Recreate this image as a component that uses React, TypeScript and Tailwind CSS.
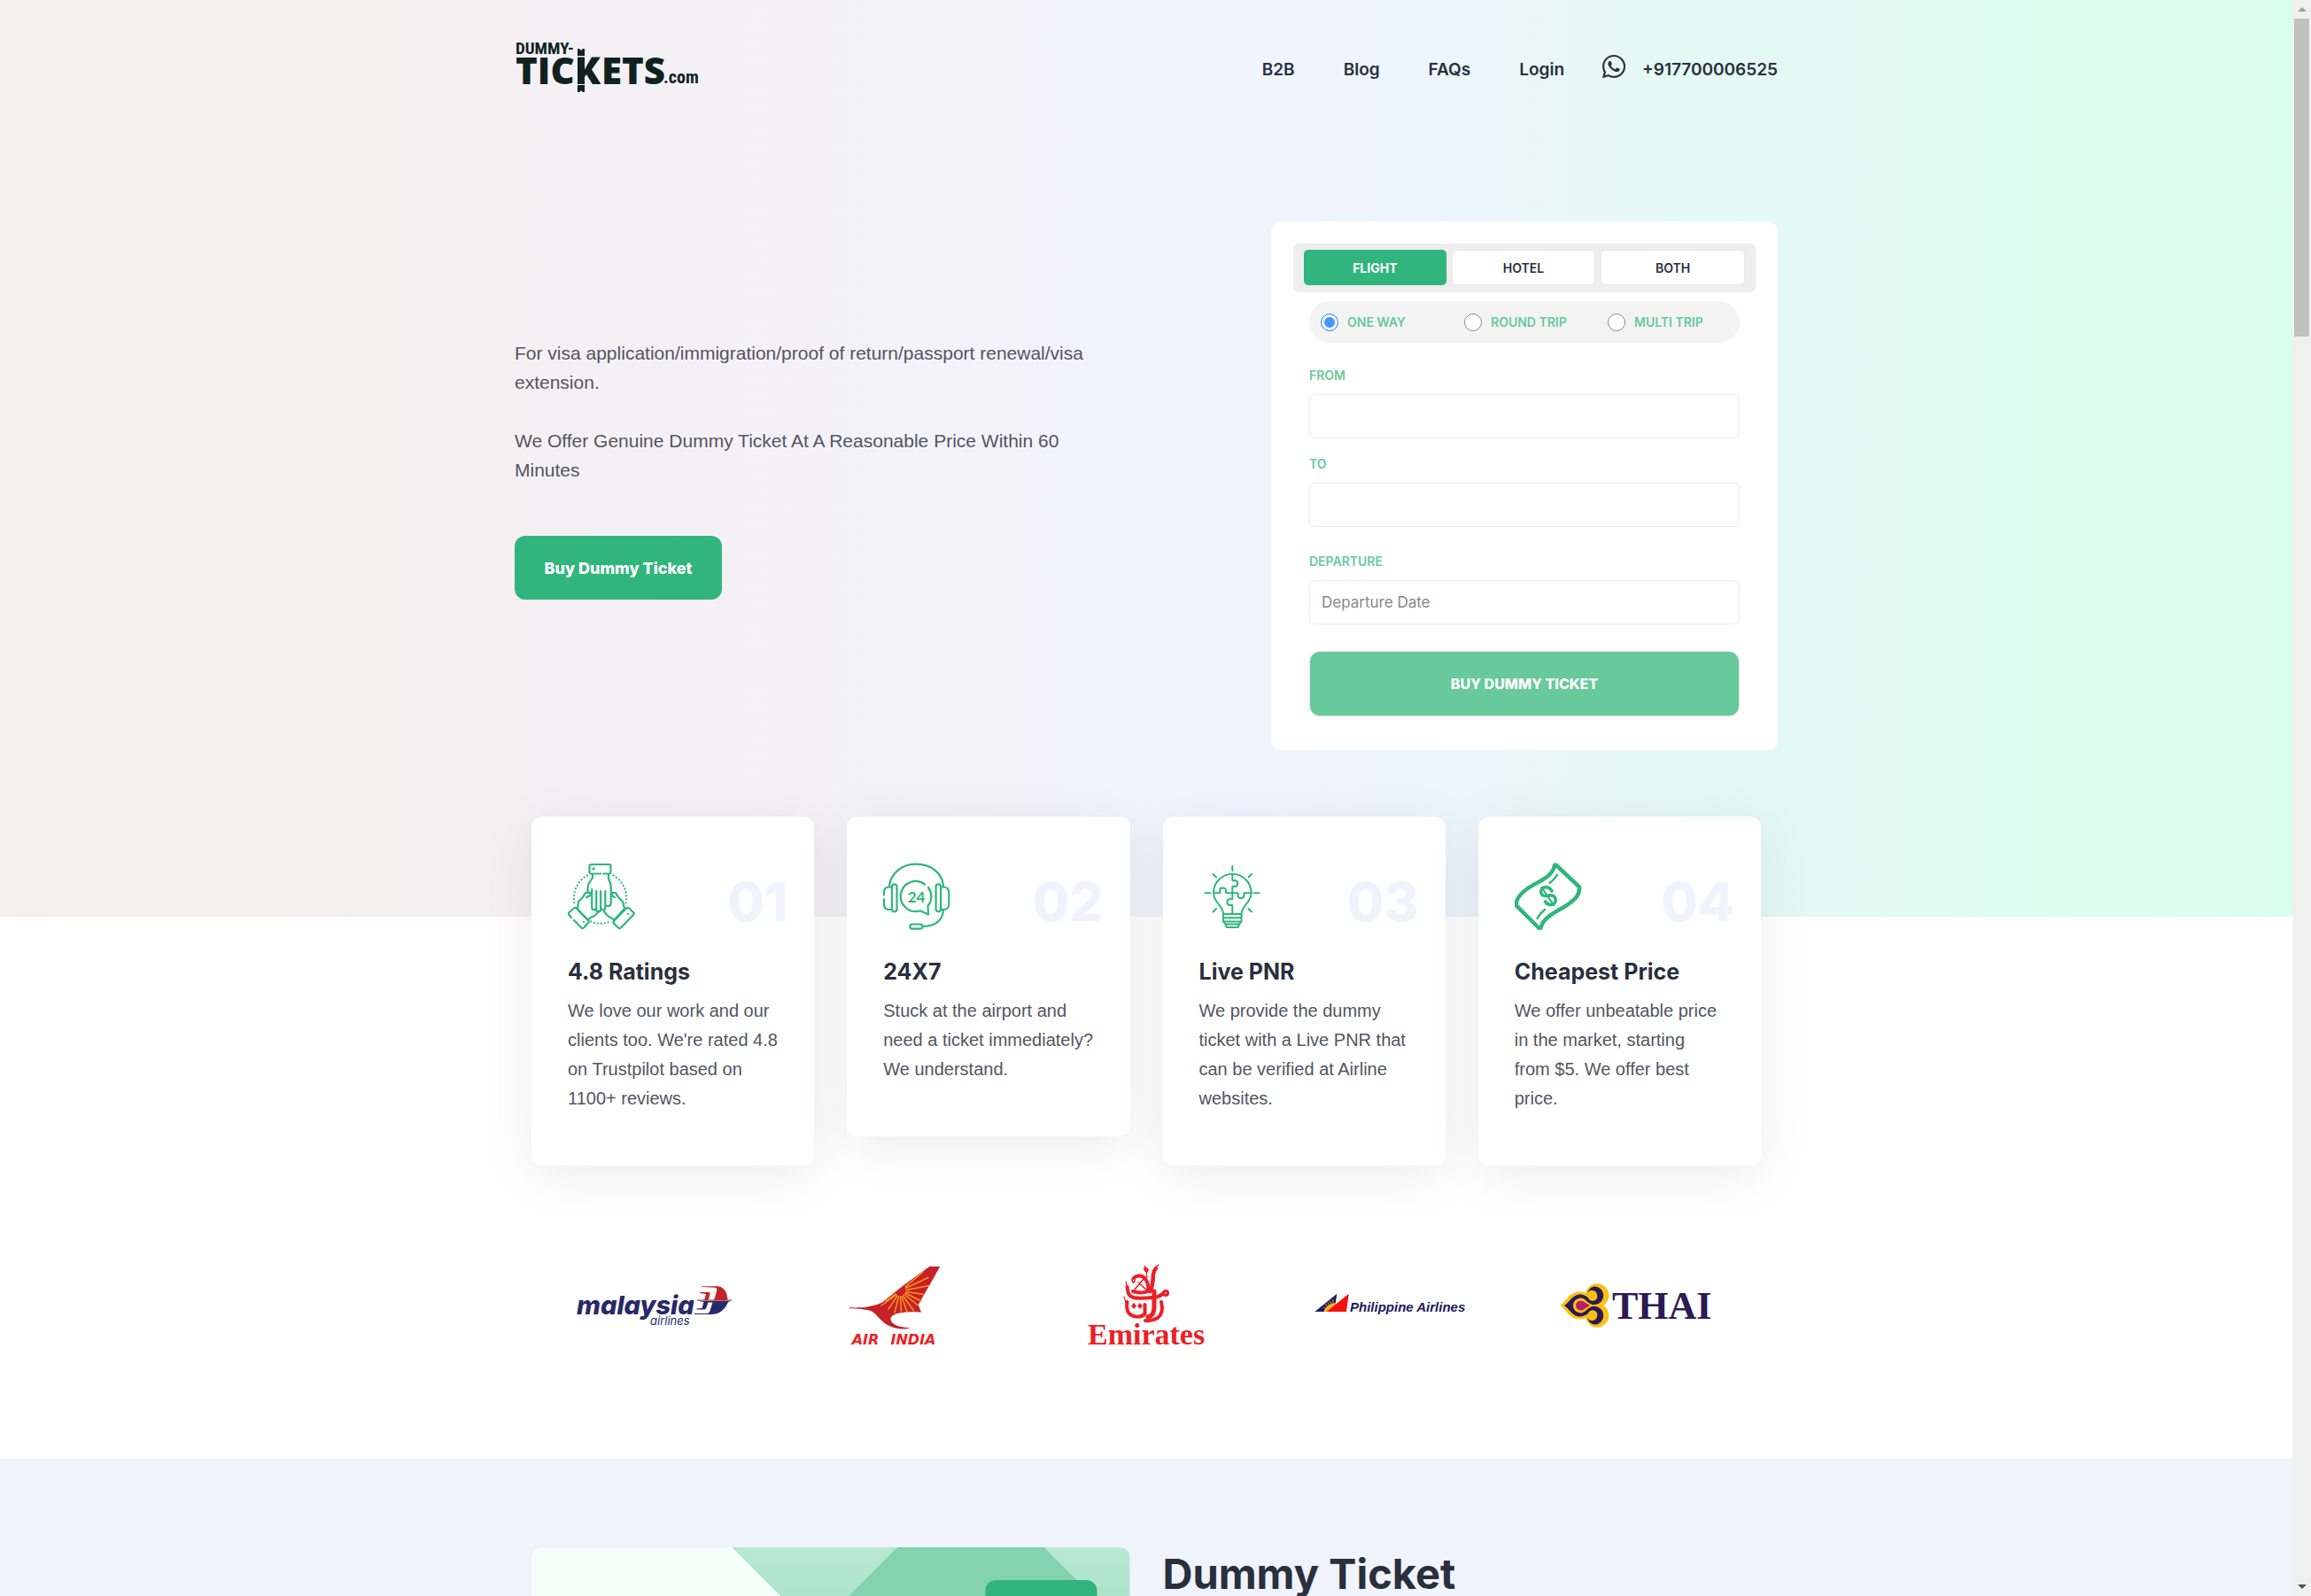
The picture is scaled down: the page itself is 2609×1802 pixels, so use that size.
import React from "react";
import { FaWhatsapp } from "react-icons/fa";

const navLinks = ["B2B", "Blog", "FAQs", "Login"];

function BrandLogo() {
  return (
    <svg width="210" height="64" viewBox="0 0 210 64" fill="#10221f" aria-label="Dummy-Tickets.com">
      <text x="1" y="17" fontSize="19" fontWeight="700" fontFamily="'Liberation Sans Narrow','Roboto Condensed',Roboto,sans-serif">DUMMY-</text>
      <text x="1" y="51" fontSize="42" fontWeight="800" fontFamily="'Open Sans',sans-serif">TIC</text>
      <path d="M71 11h2.500c0 2 3 2 3 0H79v8h-8zM71 60h2.500c0-2 3-2 3 0H79v-8h-8zM71 20.500h8v14l8-14h10L87 34.500 97.500 51H88l-7-11-2 3v8h-8z" />
      <text x="98" y="51" fontSize="42" fontWeight="800" fontFamily="'Open Sans',sans-serif">ETS</text>
      <text x="168" y="50" fontSize="20" fontWeight="700" fontFamily="'Liberation Sans Narrow','Roboto Condensed',Roboto,sans-serif">.com</text>
    </svg>
  );
}

const iconProps = {
  width: 76,
  height: 76,
  viewBox: "0 0 76 76",
  fill: "none",
  stroke: "#2fb67c",
  strokeWidth: 2.2,
  strokeLinecap: "round" as const,
  strokeLinejoin: "round" as const,
};

function HandsIcon() {
  return (
    <svg {...iconProps}>
      <path d="M37 12.500H26.500a2 2 0 0 1-2-2V4a2 2 0 0 1 2-2H46.500a2 2 0 0 1 2 2v6.500a2 2 0 0 1-2 2H40" />
      <circle cx="29" cy="7" r="0.600" />
      <path d="M28 13v4l-4 6c-1 2-1.400 3-1.400 5v6M46 13v5l2 5c.6 1.500.7 2.500.7 4v19c0 2-1 3-3.600 3" />
      <path d="M27.200 30v21c0 3 5 3 5 0V32M32.200 50v3c0 3 5 3 5 0V32M37.300 51c0 3 5 3 5 0V32M42.300 47c0 1.500 1 2 2.500 2" />
      <path d="M26 34h-6l-3 5-5 5-1 9 12 12c1-3 4-3 7-5 2-1 3-3 5-5" />
      <path d="M21 39c2 0 4-2 5-4" />
      <path d="M49 34h5l3 5 5 5 2 8-12 13c-2-4-6-3-8-6l-3-4" />
      <path d="M53 39c-2 0-3-2-4-4M4 62l-2.500-3c-.8-1-.8-2 0-3L7 51.500c.8-.8 2-.8 3 0L23 65c.8 1 .8 2 0 3l-5 5.500c-.8.8-1.800.8-2.600 0L7 65" />
      <path d="M66 51.500 52 66c-.8 1-.8 1.800 0 2.600l5 4.900c.9.900 2 .9 2.900 0L74 59c.9-1 .9-2 0-3l-5-4.500c-1-.9-2-.9-3 0z" />
      <path d="M18 67v.1M68 58v.1" />
      <path d="M22 14.500A29 29 0 0 0 7.500 46M51.500 14.500A29 29 0 0 1 65.500 46M26 66.500a29 29 0 0 0 22 0" strokeDasharray="0.100 3.900" />
    </svg>
  );
}

function HeadsetIcon() {
  return (
    <svg {...iconProps}>
      <path d="M6.800 27.500C8 12 21 1.700 37.500 1.700S67 12 68.200 27" />
      <rect x="10" y="24.300" width="5.500" height="31" rx="2.700" />
      <rect x="59.600" y="24.300" width="5.500" height="31" rx="2.700" />
      <path d="M10 27.500H7c-4 0-6 2.500-6 6v3M1 41v6c0 3.500 2 6 6 6h3" />
      <path d="M65 27.500h3c4 0 6.300 2.500 6.300 6V47c0 3.500-2.300 6-6.300 6h-3" />
      <path d="M47 24.500a17 17 0 1 0-5 29.800l9 4.200-.5-9.500a17 17 0 0 0 .5-21" />
      <path d="M68 54c-1 11-9 18-23 18" />
      <rect x="30.300" y="69.500" width="14.200" height="5.200" rx="2.600" />
      <text x="37.500" y="45" textAnchor="middle" fontSize="17" fontWeight="700" fill="#2fb67c" stroke="none" fontFamily="Lato,sans-serif">24</text>
    </svg>
  );
}

function BulbIcon() {
  return (
    <svg {...iconProps} strokeWidth={2}>
      <path d="M27 58c0-10-11-12-11-24a21.300 21.300 0 0 1 42.600 0c0 12-11 14-11 24z" />
      <path d="M16 34.300h6.500c1.500 0 .5-1.500.5-2.500 0-4.500 7-4.500 7 0 0 1-1 2.500.5 2.500H43c1.500 0 .5 1.500.5 2.500 0 4.500 7 4.500 7 0 0-1-1-2.500.5-2.500h7.500" />
      <path d="M37.300 13v6.500c0 1.500 1.500.5 2.500.5 4.500 0 4.500 7 0 7-1 0-2.500-1-2.500.5v13c0 1.500-1.500.5-2.500.5-4.500 0-4.500 7 0 7 1 0 2.500-1 2.500.5V58" />
      <path d="M27 58h20.500v8.500l-2.500 3H29.500l-2.500-3zM27 62.300h20.500M27 66.500h20.500M29.500 69.500 31 73h12.500l1.500-3.500" />
      <path d="M37.300 4v5.300M15.500 13l3.500 3.500M59 13l-3.500 3.500M6.500 34.300h6M61.500 34.300h6M15.500 55.500 19 52M59 55.500 55.500 52" />
    </svg>
  );
}

function MoneyIcon() {
  return (
    <svg {...iconProps} strokeWidth={4.500}>
      <path d="M46.500 2.500 73 27.500c1 9-6 15-14 20.500-13 8-27 14-29.500 25.500L27.500 74 1.500 48c0-8 6-14 14-19.500C27 21 43 16 45 3z" />
      <path d="M48 13.500Q45 19 39.500 23M34 53q-5.500 4-8.500 10" strokeWidth={2.400} />
      <path d="M42 32c-2-4-7-5.500-10-3.500s-3.500 6 0 8.500c3 1.800 8-1.500 11.500.5s3.500 7 .5 9-7.500 1-9.500-2.500" strokeWidth={3.600} />
      <path d="M30.500 28 44 48" strokeWidth={2.200} />
    </svg>
  );
}

const features = [
  { n: "01", title: "4.8 Ratings", text: "We love our work and our clients too. We're rated 4.8 on Trustpilot based on 1100+ reviews.", Icon: HandsIcon },
  { n: "02", title: "24X7", text: "Stuck at the airport and need a ticket immediately? We understand.", Icon: HeadsetIcon },
  { n: "03", title: "Live PNR", text: "We provide the dummy ticket with a Live PNR that can be verified at Airline websites.", Icon: BulbIcon },
  { n: "04", title: "Cheapest Price", text: "We offer unbeatable price in the market, starting from $5. We offer best price.", Icon: MoneyIcon },
];

const airlineProps = { width: 200, height: 130, viewBox: "0 0 200 130" };

function MalaysiaLogo() {
  return (
    <svg {...airlineProps} aria-label="Malaysia Airlines">
      <text x="12" y="74" fontSize="29" fontWeight="800" fontStyle="italic" fill="#28286a" fontFamily="Inter,sans-serif">malaysia</text>
      <text x="95" y="86" fontSize="13" fontStyle="italic" fill="#28286a" fontFamily="Inter,sans-serif">airlines</text>
      <path fill="#c62127" d="M153 42.300h17c8 0 12 6 12.500 16H167l3-10c1-3 0-4-2-4.500l-15-.7zM151 49h10c1.500 0 2 1 1.500 2.500l-2 6.800H156l2-7.300-7-1zM148 57.500h39v1h-39z" />
      <path fill="#28286a" d="M148 58.700h39l-4 1.300c-4 10-11 14-19 14h-19v-1h13c3 0 4-1 4.500-3l3-9.500h-5l-2 6c-.6 1.500-1.500 2-3 2h-8v-1l6-.5 2-7z" />
    </svg>
  );
}

function AirIndiaLogo() {
  return (
    <svg {...airlineProps} aria-label="Air India">
      <path fill="#c62127" d="M133.300 20h12l-24.600 43.300 3.300 8.400C105 70 90 73 89.500 79c0 6 9 10 22.800 10-10 3-19 1.500-28.300-4C77 80 74 74 68 70.500c-7-2.500-15-3-25.300-3.200v-1C54 66.500 66 67 80 60.500L103 42z" />
      <path stroke="#f5951f" strokeWidth="1.500" strokeLinecap="round" d="M106 43l20-17M106 44.500l26-12M107 46.500l26-5M107 48.500l20 3M106 50l18 9M105 51.500l15 12M103.500 53l12 17M102 54l6 17M100.500 54l1 17M98.500 54 94 72M97 53 87 68M96 52 79 64M95 51 84 59" />
      <path fill="#c62127" d="M95.500 50l9.500-8c2 3 2 7-1 9.500s-6.500 1.500-8.500-1.500z" />
      <g textAnchor="middle" fontSize="16" fontWeight="700" fontStyle="italic" fill="#ec1f26" fontFamily="'DejaVu Sans',sans-serif">
        <text x="61" y="108">AIR</text>
        <text x="115" y="108">INDIA</text>
      </g>
    </svg>
  );
}

function EmiratesLogo() {
  return (
    <svg {...airlineProps} aria-label="Emirates">
      <g fill="none" stroke="#ec1f26" strokeLinecap="round" strokeLinejoin="round">
        <path strokeWidth="4.500" d="M111 22c-4 4-3 9-3.500 14s-1 8-3 12" />
        <path strokeWidth="1.200" d="M114 18c-3 2-4 5-4 8M100 24l1 9" />
        <path strokeWidth="4" d="M86 33c4-4 10-3 13 1 3 4 4 9 3 14-5 2-12 1.500-17 0" />
        <path strokeWidth="1.600" d="M84 34c0 5 3 5 3 1M97 34 87 46M91 38l10 9" />
        <path strokeWidth="4" d="M78.500 43c1 8 2 10.500 7 12 8 2 21 0 26-.5 4-1 6-2.500 8-4.500" />
        <path strokeWidth="1.200" d="M77 37l2 7M75 54l3 10" />
        <circle cx="122" cy="50" r="2.500" strokeWidth="3" />
        <path strokeWidth="5" d="M109 48v18c0 6-2 10-7 11" />
        <path strokeWidth="4" d="M78.500 60c-1 7 0 12 4 14.500 5 3 12 3 16-1V63" />
        <path strokeWidth="4" d="M117 60c2 8 1 14-4 18-5 3-8 4-14 3" />
      </g>
      <path fill="#ec1f26" d="M98 19l5 4-2 5-4-4zM86 61l3 3.500-3 3.500-3-3.500zM93 61l3 3.500-3 3.500-3-3.500z" />
      <text x="34" y="108" fontSize="34" fontWeight="700" fill="#ec1f26" fontFamily="'Liberation Serif',serif">Emirates</text>
    </svg>
  );
}

function PhilippineLogo() {
  return (
    <svg {...airlineProps} aria-label="Philippine Airlines">
      <path fill="#201a5c" d="M12.300 71l25-20.300L35.500 63 26.500 71z" />
      <path stroke="#f6b71d" strokeWidth="0.800" d="M27 69l-5-3M28 67l-4-5M29.500 66l-2.500-6M31 64.500l-1-6M33 63l0-6" />
      <path fill="#f6b71d" d="M22.500 71c1-5 6-9 13.500-10l-1 4-8 6z" />
      <path fill="#f50f0f" d="M25.500 71 50.700 50.700 48 71z" />
      <text x="52" y="71" fontSize="15" fontWeight="700" fontStyle="italic" fill="#201a5c" fontFamily="'Liberation Sans',sans-serif">Philippine Airlines</text>
    </svg>
  );
}

function ThaiLogo() {
  return (
    <svg {...airlineProps} aria-label="Thai">
      <path fill="#fbc115" d="M12 64c6-2 9-15 22-15.500 3 0 5 .5 7 1.500a13.300 13.300 0 1 1 20 14 13.300 13.300 0 1 1-20 14c-2 1-4 1.500-7 1.500C21 79 18 66 12 64z" />
      <path fill="#2c1a55" d="M17 64c6-4 9-12.500 18-12.500 6 0 8 4 14 6.500a5.500 5.500 0 1 0-6-6.500c.5-5 4-9 9-9a10.300 10.300 0 0 1 0 20.500h-6c-4-3-6-6.500-10.500-6.500a7.500 7.500 0 0 0 0 15c4.500 0 6.500-3.500 10.500-6.500h6a10.300 10.300 0 0 1 0 20.500c-5 0-8.500-4-9-9a5.500 5.500 0 1 0 6-6.500c-6 2.500-8 6.500-14 6.500-9 0-12-8.500-18-12.500z" />
      <circle cx="49" cy="53.500" r="5.300" fill="#fbc115" />
      <circle cx="49" cy="74.500" r="5.300" fill="#fbc115" />
      <path fill="#fbc115" d="M27 64a8.300 8.300 0 0 1 14-6c3 3 6 5 11 6-5 1-8 3-11 6a8.300 8.300 0 0 1-14-6z" />
      <path fill="#b51f6b" d="M30 64a5.700 5.700 0 0 1 9.500-4l6.500 4-6.500 4a5.700 5.700 0 0 1-9.500-4z" />
      <text x="71" y="79" fontSize="44" fontWeight="700" fill="#2c1a55" fontFamily="'Liberation Serif',serif">THAI</text>
    </svg>
  );
}

const airlines = [MalaysiaLogo, AirIndiaLogo, EmiratesLogo, PhilippineLogo, ThaiLogo];

const labelClass = "text-[14px] leading-5 font-semibold text-[#67c99b]";
const fieldClass =
  "block h-[50px] w-full rounded-md border border-[#ebebeb] bg-white px-[13px] text-[17px] text-[#292f3d] placeholder:text-[#85878e] outline-none";

function BookingForm() {
  return (
    <form className="w-[572px] shrink-0 rounded-xl bg-white px-[25px] pt-[25px] pb-[38px]" onSubmit={(e) => e.preventDefault()}>
      <div className="flex h-[55px] items-start gap-[6px] rounded-md bg-[#eeeeee] px-3 pt-[7px]">
        <button type="button" className="h-[40px] flex-1 rounded-[5px] bg-[#32b57c] text-[14px] font-bold text-white">FLIGHT</button>
        <button type="button" className="h-[40px] flex-1 rounded-[5px] border border-[#e6e7f2] bg-white text-[14px] font-semibold text-[#292f3d]">HOTEL</button>
        <button type="button" className="h-[40px] flex-1 rounded-[5px] border border-[#e6e7f2] bg-white text-[14px] font-semibold text-[#292f3d]">BOTH</button>
      </div>
      <div className="mt-[10px] px-[18px]">
        <fieldset className="grid h-[47px] grid-cols-3 items-center rounded-full bg-[#f3f3f3]">
          {["ONE WAY", "ROUND TRIP", "MULTI TRIP"].map((t, i) => (
            <label key={t} className="flex items-center gap-[10px] pl-[13px] whitespace-nowrap text-[14px] font-semibold text-[#67c99b]">
              <input
                type="radio"
                name="trip"
                defaultChecked={i === 0}
                className="size-5 shrink-0 appearance-none rounded-full border border-[#8b8b8b] bg-white checked:border-[#4397ff] checked:bg-[#4397ff] checked:shadow-[inset_0_0_0_3px_white]"
              />
              {t}
            </label>
          ))}
        </fieldset>
        <label htmlFor="from" className={labelClass + " mt-[27px] block"}>FROM</label>
        <input id="from" type="text" className={fieldClass + " mt-[11px]"} />
        <label htmlFor="to" className={labelClass + " mt-[19px] block"}>TO</label>
        <input id="to" type="text" className={fieldClass + " mt-[11px]"} />
        <label htmlFor="departure" className={labelClass + " mt-[29px] block"}>DEPARTURE</label>
        <input id="departure" type="text" placeholder="Departure Date" className={fieldClass + " mt-[11px]"} />
        <button type="submit" className="mt-[30px] h-[74px] w-full rounded-xl border border-[#e4e9e7] bg-[#68c99b] text-[16px] font-extrabold text-white">
          BUY DUMMY TICKET
        </button>
      </div>
    </form>
  );
}

function Scrollbar() {
  return (
    <div className="flex w-[21px] shrink-0 flex-col items-center justify-between bg-[#f0f0f0]" aria-hidden="true">
      <div className="flex flex-col items-center">
        <div className="flex h-[21px] items-center">
          <div className="border-x-[5px] border-b-[5px] border-x-transparent border-b-[#a0a0a0]" />
        </div>
        <div className="h-[359px] w-[17px] bg-[#c1c1c1]" />
      </div>
      <div className="flex h-[21px] items-center">
        <div className="border-x-[5px] border-t-[5px] border-x-transparent border-t-[#505050]" />
      </div>
    </div>
  );
}

export default function App() {
  return (
    <div className="flex h-screen overflow-hidden bg-white font-[Inter,sans-serif] text-[#292f3d]">
      <div className="min-w-0 flex-1">
        <section className="bg-[linear-gradient(90deg,#f5eee9_0%,#f3f3fe_50%,#ebf6fc_64%,#e5f8f5_72%,#d9ffee_100%)] pb-[188px]">
          <div className="mx-auto max-w-[1426px]">
            <header className="flex h-[158px] items-center justify-between">
              <a href="#home" className="mb-[6px] block"><BrandLogo /></a>
              <nav className="flex items-center text-[19px] font-semibold">
                <div className="flex gap-[55px]">
                  {navLinks.map((l) => (
                    <a key={l} href={"#" + l}>{l}</a>
                  ))}
                </div>
                <a href="tel:+917700006525" className="ml-[41px] flex items-center gap-[17px]">
                  <FaWhatsapp className="mb-2 size-[30px]" />
                  +917700006525
                </a>
              </nav>
            </header>
            <div className="flex items-start justify-between pt-[92px]">
              <div className="w-[684px] pt-[132px]">
                <div className="space-y-[33px] font-['Liberation_Sans',sans-serif] text-[21px] leading-[33px] text-[#53555f]">
                  <p>For visa application/immigration/proof of return/passport renewal/visa extension.</p>
                  <p>We Offer Genuine Dummy Ticket At A Reasonable Price Within 60 Minutes</p>
                </div>
                <button type="button" className="mt-[58px] h-[72px] w-[234px] rounded-xl bg-[#32b57c] text-[18px] font-extrabold text-white">
                  Buy Dummy Ticket
                </button>
              </div>
              <BookingForm />
            </div>
          </div>
        </section>

        <section className="relative mx-auto -mt-[113px] grid max-w-[1388px] grid-cols-4 items-start gap-[37px]">
          {features.map(({ n, title, text, Icon }) => (
            <article key={n} className="rounded-xl bg-white pt-[52px] pr-[30px] pb-[59px] pl-[41px] shadow-[0_10px_60px_rgba(0,0,0,0.08)]">
              <div className="flex justify-between">
                <Icon />
                <span className="pt-[13px] text-[60px] leading-[62px] font-extrabold text-[#f0f3fb]">{n}</span>
              </div>
              <h3 className="mt-[31px] text-[25px] leading-[32px] font-bold">{title}</h3>
              <p className="mt-[12px] max-w-[237px] font-['Liberation_Sans',sans-serif] text-[20px] leading-[33px] text-[#53555f]">{text}</p>
            </article>
          ))}
        </section>

        <section className="mx-auto grid max-w-[1388px] grid-cols-5 justify-items-center pt-[94px] pb-[107px]">
          {airlines.map((Logo, i) => (
            <Logo key={i} />
          ))}
        </section>

        <section className="bg-[#f0f3fb] pt-[100px]">
          <div className="mx-auto grid max-w-[1388px] grid-cols-2 gap-[37px]">
            <svg viewBox="0 0 675 400" className="w-full rounded-xl" aria-hidden="true">
              <defs>
                <linearGradient id="mint" x1="0" y1="0" x2="0" y2="1">
                  <stop offset="0" stopColor="#b9e8d2" />
                  <stop offset="1" stopColor="#68c99b" />
                </linearGradient>
              </defs>
              <rect width="675" height="400" fill="url(#mint)" />
              <path d="M0 0h226l400 400H0z" fill="#f5fffa" />
              <path d="M413 0h165l400 400H13z" fill="#82d3ae" />
              <rect x="512" y="37" width="126" height="180" rx="12" fill="#32b57c" />
            </svg>
            <h2 className="text-[47px] leading-[60px] font-bold">Dummy Ticket</h2>
          </div>
        </section>
      </div>
      <Scrollbar />
    </div>
  );
}
